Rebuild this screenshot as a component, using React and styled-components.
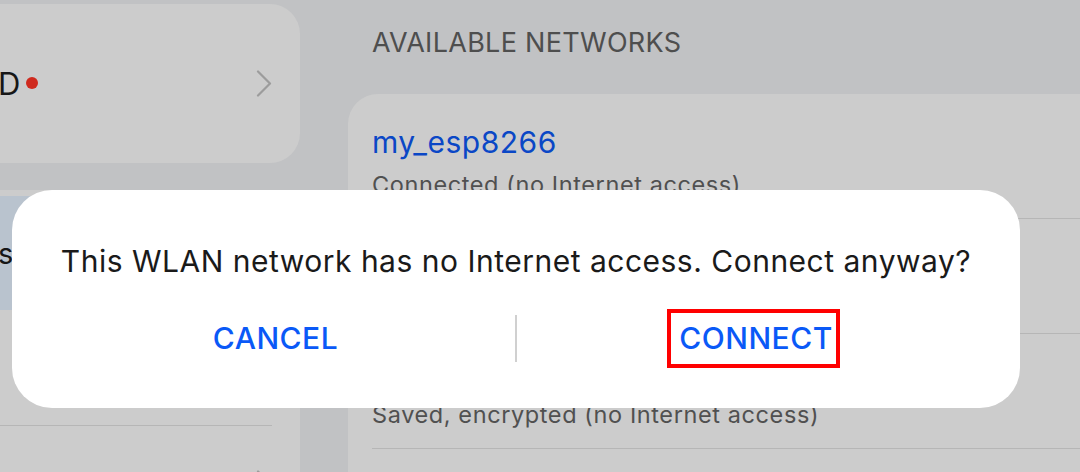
import React from "react";
import styled, { createGlobalStyle } from "styled-components";

const Global = createGlobalStyle`
  html, body {
    margin: 0;
    padding: 0;
    width: 1080px;
    height: 472px;
    overflow: hidden;
    background: #c1c2c4;
    font-family: Inter, "Noto Sans", "Liberation Sans", sans-serif;
  }
`;

const Screen = styled.div`
  position: relative;
  width: 1080px;
  height: 472px;
  overflow: hidden;
  display: flex;
  align-items: flex-start;
  gap: 48px;
`;

const LeftColumn = styled.div`
  flex: 0 0 340px;
  margin-left: -40px;
  padding-top: 4px;
  display: flex;
  flex-direction: column;
  gap: 27px;
`;

const Card = styled.div`
  flex-shrink: 0;
  background: #cccccc;
  border-radius: 30px;
`;

const AccountCard = styled(Card)`
  height: 159px;
  display: flex;
  align-items: center;
  padding: 0 28px 0 38px;
  box-sizing: border-box;
`;

const AccountName = styled.span`
  font-size: 31px;
  color: #161616;
  line-height: 40px;
`;

const Badge = styled.span`
  width: 12px;
  height: 12px;
  border-radius: 50%;
  background: #cf2a1e;
  margin-left: 6px;
  margin-top: -2px;
`;

const Spacer = styled.div`
  flex: 1;
`;

const Chevron = () => (
  <svg width="16" height="27" viewBox="0 0 16 27" fill="none">
    <polyline points="2,1.5 14,13.5 2,25.5" stroke="#9c9c9c" strokeWidth="2.2" strokeLinecap="round" strokeLinejoin="round" />
  </svg>
);

const MenuCard = styled(Card)`
  padding: 6px;
  display: flex;
  flex-direction: column;
`;

const MenuRow = styled.div`
  flex-shrink: 0;
  height: ${(p) => p.$h}px;
  display: flex;
  align-items: center;
  padding: 0 22px 0 32px;
  border-radius: 24px;
  background: ${(p) => (p.$active ? "#b9c3ce" : "transparent")};
  position: relative;
  &::after {
    content: "";
    display: ${(p) => (p.$divider ? "block" : "none")};
    position: absolute;
    left: 32px;
    right: 22px;
    bottom: 0;
    height: 1px;
    background: #b6b6b6;
  }
`;

const MenuLabel = styled.span`
  font-size: 29px;
  color: #161616;
`;

const RightColumn = styled.div`
  flex: 1;
  margin-right: -60px;
  display: flex;
  flex-direction: column;
`;

const SectionTitle = styled.div`
  padding: 27px 0 0 24px;
  height: 32px;
  line-height: 32px;
  font-size: 27px;
  letter-spacing: 0.3px;
  color: #4e4e4e;
  margin-bottom: 35px;
`;

const NetworkCard = styled(Card)`
  padding: 10px 0 0 24px;
`;

const NetworkRow = styled.div`
  flex-shrink: 0;
  height: 115px;
  padding-top: 18px;
  box-sizing: border-box;
  border-bottom: 1px solid #b6b6b6;
  display: flex;
  flex-direction: column;
  gap: 7px;
`;

const NetworkName = styled.div`
  font-size: 30px;
  line-height: 40px;
  color: ${(p) => (p.$active ? "#0a47c6" : "#161616")};
  letter-spacing: 0.5px;
`;

const NetworkStatus = styled.div`
  font-size: 23.5px;
  line-height: 32px;
  color: #505050;
  letter-spacing: 0.6px;
`;

const Dialog = styled.div`
  position: absolute;
  left: 12px;
  top: 190px;
  width: 1008px;
  height: 218px;
  box-sizing: border-box;
  background: #ffffff;
  border-radius: 40px;
  padding: 51px 24px 0;
  display: flex;
  flex-direction: column;
  gap: 29px;
`;

const Message = styled.div`
  text-align: center;
  font-size: 30px;
  line-height: 40px;
  letter-spacing: 0.5px;
  color: #1a1a1a;
  white-space: nowrap;
`;

const Actions = styled.div`
  display: flex;
  align-items: center;
  height: 56px;
`;

const ActionButton = styled.div`
  flex: 1;
  display: flex;
  justify-content: center;
  align-items: center;
  font-size: 30px;
  font-weight: 500;
  letter-spacing: 0.5px;
  color: #0a59f7;
`;

const ActionDivider = styled.div`
  width: 2px;
  height: 47px;
  background: #d0d0d0;
`;

const Highlight = styled.span`
  display: inline-flex;
  align-items: center;
  height: 51px;
  padding: 0 3px 0 8px;
  border: 4px solid #ff0000;
  margin-left: -6px;
`;

export default function App() {
  const networks = [
    { name: "my_esp8266", status: "Connected (no Internet access)", active: true },
    { name: "HUAWEI-5G", status: "Saved, encrypted" },
    { name: "Office_WLAN", status: "Saved, encrypted (no Internet access)" },
    { name: "Guest", status: "Open" },
  ];
  return (
    <>
      <Global />
      <Screen>
        <LeftColumn>
          <AccountCard>
            <AccountName>D</AccountName>
            <Badge />
            <Spacer />
            <Chevron />
          </AccountCard>
          <MenuCard>
            <MenuRow $h={114} $active>
              <MenuLabel>s</MenuLabel>
            </MenuRow>
            <MenuRow $h={116} $divider />
            <MenuRow $h={115}>
              <Spacer />
              <Chevron />
            </MenuRow>
          </MenuCard>
        </LeftColumn>
        <RightColumn>
          <SectionTitle>AVAILABLE NETWORKS</SectionTitle>
          <NetworkCard>
            {networks.map((n) => (
              <NetworkRow key={n.name}>
                <NetworkName $active={n.active}>{n.name}</NetworkName>
                <NetworkStatus>{n.status}</NetworkStatus>
              </NetworkRow>
            ))}
          </NetworkCard>
        </RightColumn>
        <Dialog>
          <Message>This WLAN network has no Internet access. Connect anyway?</Message>
          <Actions>
            <ActionButton>CANCEL</ActionButton>
            <ActionDivider />
            <ActionButton>
              <Highlight>CONNECT</Highlight>
            </ActionButton>
          </Actions>
        </Dialog>
      </Screen>
    </>
  );
}
